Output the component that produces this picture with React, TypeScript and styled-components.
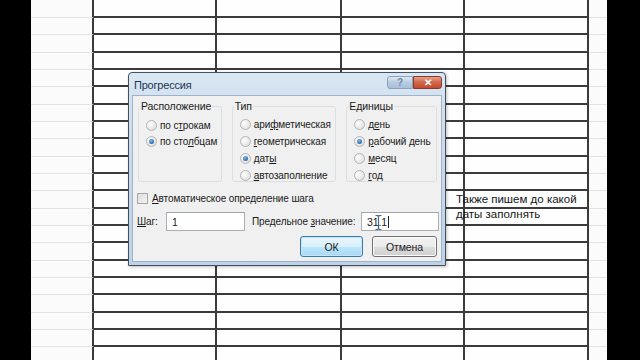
import React from 'react'
import styled, { createGlobalStyle } from 'styled-components'

const GlobalStyle = createGlobalStyle`
  html, body {
    margin: 0;
    padding: 0;
    background: #000;
  }
  body {
    font-family: 'Liberation Sans', Arial, sans-serif;
  }
`

const colWidths = [63, 123, 125, 123, 124, 18]
const ROWS = 21

const Screen = styled.div`
  position: relative;
  width: 640px;
  height: 360px;
  overflow: hidden;
  background: #000;
  display: flex;
`

const Sheet = styled.div`
  margin-left: 31px;
  width: 576px;
  height: 360px;
  background: #fdfdfd;
  display: grid;
  grid-template-columns: ${colWidths.map(w => `${w}px`).join(' ')};
  grid-template-rows: 18px repeat(${ROWS - 1}, 17.33px);
  overflow: hidden;
`

const Cell = styled.div<{ $side?: boolean; $edge?: boolean }>`
  box-sizing: border-box;
  background: ${p => (p.$side ? '#fbfbfb' : '#fefefe')};
  border-bottom: ${p => (p.$side ? '1px solid #e3e3e3' : '2px solid #3b3b3b')};
  border-right: ${p => (p.$edge ? 'none' : '2px solid #3b3b3b')};
`

/* dialog */
const Dialog = styled.div`
  position: absolute;
  left: 128px;
  top: 72px;
  width: 318px;
  height: 194px;
  box-sizing: border-box;
  border: 1px solid #44505c;
  border-radius: 4px 4px 0 0;
  background: linear-gradient(180deg, #d9e6f3 0%, #c9dbee 40%, #bed3e9 100%);
  padding: 0 3px 3px 3px;
  display: flex;
  flex-direction: column;
  box-shadow: 1px 1px 3px rgba(0, 0, 0, 0.25);
`

const TitleBar = styled.div`
  height: 24px;
  display: flex;
  align-items: flex-start;
  justify-content: space-between;
  padding-left: 2px;
`

const Title = styled.span`
  margin-top: 6px;
  font-size: 11px;
  letter-spacing: -0.2px;
  color: #1d3451;
`

const Controls = styled.div`
  display: flex;
  margin-top: 3px;
`

const CtrlButton = styled.div<{ $close?: boolean }>`
  width: ${p => (p.$close ? '29px' : '26px')};
  height: 13px;
  box-sizing: border-box;
  border: 1px solid ${p => (p.$close ? '#8a3a2a' : '#8ca3bd')};
  border-radius: ${p => (p.$close ? '0 3px 3px 0' : '3px 0 0 3px')};
  background: ${p =>
    p.$close
      ? 'linear-gradient(180deg, #e8a08a 0%, #d46a4e 45%, #c24a2e 100%)'
      : 'linear-gradient(180deg, #dde8f3 0%, #b8cbe0 50%, #aac0d8 100%)'};
  display: flex;
  align-items: center;
  justify-content: center;
  font-size: 10px;
  font-weight: bold;
  color: ${p => (p.$close ? '#fff' : '#6f88a6')};
  line-height: 1;
`

const Body = styled.div`
  flex: 1;
  background: #f0f0f0;
  border: 1px solid #9fb3c8;
  padding: 4px 4px 4px 5px;
  display: flex;
  flex-direction: column;
  font-size: 10px;
  letter-spacing: -0.1px;
  color: #1a1a1a;
`

const Groups = styled.div`
  display: flex;
  gap: 10px;
`

const GroupBox = styled.fieldset<{ $w: number }>`
  width: ${p => p.$w}px;
  min-width: 0;
  margin: 0;
  box-sizing: border-box;
  height: 82px;
  border: 1px solid #dcdfe2;
  border-radius: 3px;
  padding: 7px 0 0 7px;
  display: flex;
  flex-direction: column;
  gap: 4.8px;
`

const Legend = styled.legend`
  padding: 0 1px;
  margin-left: -6px;
  font-size: 10.5px;
  color: #1a1a1a;
`

const Option = styled.div`
  display: flex;
  align-items: center;
  gap: 3px;
  height: 12px;
  white-space: nowrap;
`

const Radio = styled.span<{ $on?: boolean }>`
  width: 11px;
  height: 11px;
  box-sizing: border-box;
  border-radius: 50%;
  border: 1px solid #b5b5b5;
  background: radial-gradient(circle at 35% 35%, #ffffff 0%, #e4e4e4 70%, #d2d2d2 100%);
  position: relative;
  flex: none;
  &::after {
    content: '';
    display: ${p => (p.$on ? 'block' : 'none')};
    position: absolute;
    left: 2px;
    top: 2px;
    width: 5px;
    height: 5px;
    border-radius: 50%;
    background: radial-gradient(circle at 40% 35%, #7fb6e8 0%, #2b6db0 70%, #1c4f86 100%);
  }
`

const CheckRow = styled.div`
  display: flex;
  align-items: center;
  gap: 4px;
  margin-top: 9px;
  margin-left: -1px;
  height: 14px;
`

const CheckBox = styled.span`
  width: 11px;
  height: 11px;
  box-sizing: border-box;
  border: 1px solid #a8a8a8;
  background: linear-gradient(135deg, #dcdcdc 0%, #f4f4f4 100%);
`

const FieldRow = styled.div`
  display: flex;
  align-items: center;
  margin-top: 7px;
  margin-left: -1px;
  height: 19px;
`

const FieldLabel = styled.span<{ $w: number }>`
  width: ${p => p.$w}px;
  flex: none;
  white-space: nowrap;
`

const Input = styled.div<{ $w: number }>`
  position: relative;
  width: ${p => p.$w}px;
  height: 19px;
  box-sizing: border-box;
  border: 1px solid #abadb3;
  border-top-color: #9ea4ac;
  background: #fff;
  padding: 0 5px;
  display: flex;
  align-items: center;
  flex: none;
  font-size: 10.5px;
`

const Caret = styled.span`
  display: inline-block;
  width: 1px;
  height: 12px;
  background: #222;
  margin-left: 1px;
`

const Pointer = styled.svg`
  position: absolute;
  left: 13px;
  top: 2px;
`

const Gap = styled.span<{ $w: number }>`
  width: ${p => p.$w}px;
  flex: none;
`

const ButtonRow = styled.div`
  display: flex;
  justify-content: flex-end;
  gap: 9px;
  margin-top: 5px;
`

const Button = styled.div<{ $default?: boolean; $w: number }>`
  width: ${p => p.$w}px;
  height: 21px;
  box-sizing: border-box;
  border-radius: 3px;
  border: 1px solid ${p => (p.$default ? '#3d7bad' : '#707070')};
  background: ${p =>
    p.$default
      ? 'linear-gradient(180deg, #eaf6fd 0%, #d9f0fc 50%, #bee6fd 51%, #a7d9f5 100%)'
      : 'linear-gradient(180deg, #f2f2f2 0%, #ebebeb 50%, #dddddd 51%, #cfcfcf 100%)'};
  box-shadow: ${p => (p.$default ? 'inset 0 0 0 1px #c4e5f6' : 'inset 0 0 0 1px #fcfcfc')};
  display: flex;
  align-items: center;
  justify-content: center;
  font-size: 10.5px;
  color: #1a1a1a;
`

const Note = styled.div`
  position: absolute;
  left: 456px;
  top: 192px;
  font-family: 'Liberation Sans', Arial, sans-serif;
  font-size: 11.5px;
  line-height: 15px;
  color: #151515;
`

const App = () => {
  const cells: React.ReactElement[] = []
  for (let r = 0; r < ROWS; r++) {
    colWidths.forEach((_, c) => {
      cells.push(
        <Cell key={`${r}-${c}`} $side={c === 0 || c === colWidths.length - 1} $edge={c === colWidths.length - 1} />
      )
    })
  }

  return (
    <Screen>
      <GlobalStyle />
      <Sheet>{cells}</Sheet>

      <Dialog>
        <TitleBar>
          <Title>Прогрессия</Title>
          <Controls>
            <CtrlButton>?</CtrlButton>
            <CtrlButton $close>✕</CtrlButton>
          </Controls>
        </TitleBar>
        <Body>
          <Groups>
            <GroupBox $w={84}>
              <Legend>Расположение</Legend>
              <Option>
                <Radio />
                <span>по с<u>т</u>рокам</span>
              </Option>
              <Option>
                <Radio $on />
                <span>по сто<u>л</u>бцам</span>
              </Option>
            </GroupBox>
            <GroupBox $w={105}>
              <Legend>Тип</Legend>
              <Option>
                <Radio />
                <span>ари<u>ф</u>метическая</span>
              </Option>
              <Option>
                <Radio />
                <span><u>г</u>еометрическая</span>
              </Option>
              <Option>
                <Radio $on />
                <span>дат<u>ы</u></span>
              </Option>
              <Option>
                <Radio />
                <span><u>а</u>втозаполнение</span>
              </Option>
            </GroupBox>
            <GroupBox $w={91}>
              <Legend>Единицы</Legend>
              <Option>
                <Radio />
                <span>д<u>е</u>нь</span>
              </Option>
              <Option>
                <Radio $on />
                <span><u>р</u>абочий день</span>
              </Option>
              <Option>
                <Radio />
                <span><u>м</u>есяц</span>
              </Option>
              <Option>
                <Radio />
                <span><u>г</u>од</span>
              </Option>
            </GroupBox>
          </Groups>

          <CheckRow>
            <CheckBox />
            <span><u>А</u>втоматическое определение шага</span>
          </CheckRow>

          <FieldRow>
            <FieldLabel $w={29}><u>Ш</u>аг:</FieldLabel>
            <Input $w={79}>1</Input>
            <Gap $w={7} />
            <FieldLabel $w={109}>Предельное <u>з</u>начение:</FieldLabel>
            <Input $w={78}>
              31.1
              <Caret />
              <Pointer width="7" height="15" viewBox="0 0 7 15">
                <path d="M0.5 0.5h2l1 1 1-1h2M3.5 1.5v12M0.5 14.5h2l1-1 1 1h2" stroke="#4a6a8a" strokeWidth="1.2" fill="none" />
              </Pointer>
            </Input>
          </FieldRow>

          <ButtonRow>
            <Button $default $w={63}>ОК</Button>
            <Button $w={65}>Отмена</Button>
          </ButtonRow>
        </Body>
      </Dialog>

      <Note>
        Также пишем до какой
        <br />
        даты заполнять
      </Note>
    </Screen>
  )
}

export default App
